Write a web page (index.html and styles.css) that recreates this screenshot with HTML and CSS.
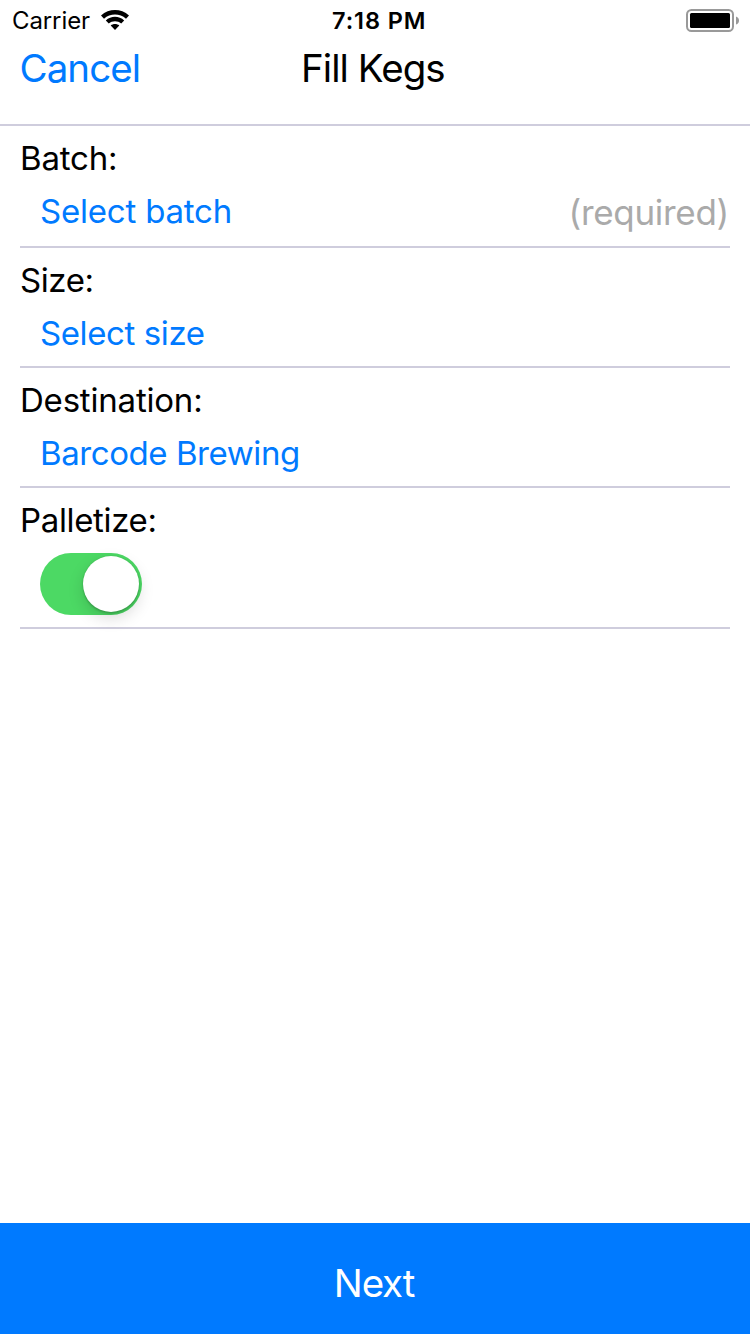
FILE: index.html
```html
<!DOCTYPE html>
<html lang="en">
<head>
<meta charset="utf-8">
<title>Fill Kegs</title>
<link rel="stylesheet" href="styles.css">
</head>
<body>
<div class="screen">
  <div class="status">
    <div class="carrier"><span class="t carrier-name">Carrier</span>
      <svg class="wifi" width="28" height="20" viewBox="0 0 28 20"><path d="M0 5.5C8-1.8 20-1.8 28 5.5L25 8.8C18.8 3.2 9.2 3.2 3 8.8ZM4.8 10.6C10 5.6 18 5.6 23.2 10.6L20.2 13.6C16.8 10.6 11.2 10.6 7.8 13.6ZM9.7 15.4C12 13.4 16 13.4 18.3 15.4L14 20Z"/></svg>
    </div>
    <span class="t time">7:18 PM</span>
    <svg class="battery" width="53" height="23" viewBox="0 0 53 23"><rect x="1" y="1" width="46" height="21" rx="4.5" fill="none" stroke="#999" stroke-width="2"/><rect x="4" y="4" width="40" height="15" rx="1.5"/><path d="M50 7.5Q53 8.5 53 11.5T50 15.5Z" fill="#999"/></svg>
  </div>
  <header class="nav">
    <a class="t cancel">Cancel</a>
    <h1 class="t title">Fill Kegs</h1>
  </header>
  <main class="form">
    <section class="field batch"><label class="t l-batch">Batch:</label><div class="row"><a class="t v-batch">Select batch</a><span class="t required">(required)</span></div></section>
    <section class="field"><label class="t l-size">Size:</label><div class="row"><a class="t v-size">Select size</a></div></section>
    <section class="field"><label class="t l-dest">Destination:</label><div class="row"><a class="t v-dest">Barcode Brewing</a></div></section>
    <section class="field pallet"><label class="t l-pallet">Palletize:</label><div class="switch"><div class="knob"></div></div></section>
  </main>
  <button class="next"><span class="t next-text">Next</span></button>
</div>
</body>
</html>
```
FILE: styles.css
```css
* { box-sizing: border-box; }
body { margin: 0; background: #fff; color: #000; font-family: Inter, sans-serif; }
.screen { width: 750px; height: 1334px; display: flex; flex-direction: column; }
.t { white-space: nowrap; font-weight: 400; }
.status { height: 40px; display: grid; grid-template-columns: 332px 1fr 64px; align-items: center; flex: none; }
.carrier { display: flex; align-items: center; padding-left: 12px; gap: 11px; font-size: 24px; letter-spacing: -.1px; }
.time { font-size: 23.5px; font-weight: 580; letter-spacing: .9px; padding-top: 1px; }
.nav { height: 86px; flex: none; border-bottom: 2px solid #cfcddd; display: grid; grid-template-columns: 282px 1fr; padding: 4px 0 0 20px; line-height: 48px; font-size: 38.5px; }
.title { margin: 0 0 0 -1px; font-size: 38.5px; font-weight: 380; letter-spacing: -.95px; }
.cancel { color: #007aff; font-weight: 380; letter-spacing: -.95px; margin-left: -.5px; }
.form { flex: 1; padding: 0 20px; }
.field { height: 120px; border-bottom: 2px solid #cfcddd; padding-top: 12px; font-size: 33px; line-height: 40px; letter-spacing: -.2px; }
.batch { height: 122px; }
.field label { display: block; }
.l-size { letter-spacing: -.4px; }
.row { display: flex; justify-content: space-between; padding: 13px 0 0 20px; color: #007aff; }
.v-batch { letter-spacing: -.2px; }
.v-size { letter-spacing: -.4px; }
.v-dest { letter-spacing: -.43px; }
.l-pallet { letter-spacing: -.35px; }
.required { color: #aaa; font-size: 35px; letter-spacing: -.3px; padding: 1px 1px 0 0; }
.pallet { height: 141px; }
.switch { width: 102px; height: 62px; margin: 13px 0 0 20px; padding: 3px; border-radius: 31px; background: #4cd964; display: flex; justify-content: flex-end; }
.knob { width: 56px; height: 56px; border-radius: 50%; background: #fff; box-shadow: 0 6px 16px rgba(0,0,0,.15), 0 2px 2px rgba(0,0,0,.14), 0 0 2px rgba(0,0,0,.15); }
.next { height: 111px; flex: none; border: 0; padding: 8px 2px 0 0; background: #007aff; color: #fff; font: 38.5px/48px Inter, sans-serif; letter-spacing: -1.1px; }
.next-text { font-weight: 380; }
```
